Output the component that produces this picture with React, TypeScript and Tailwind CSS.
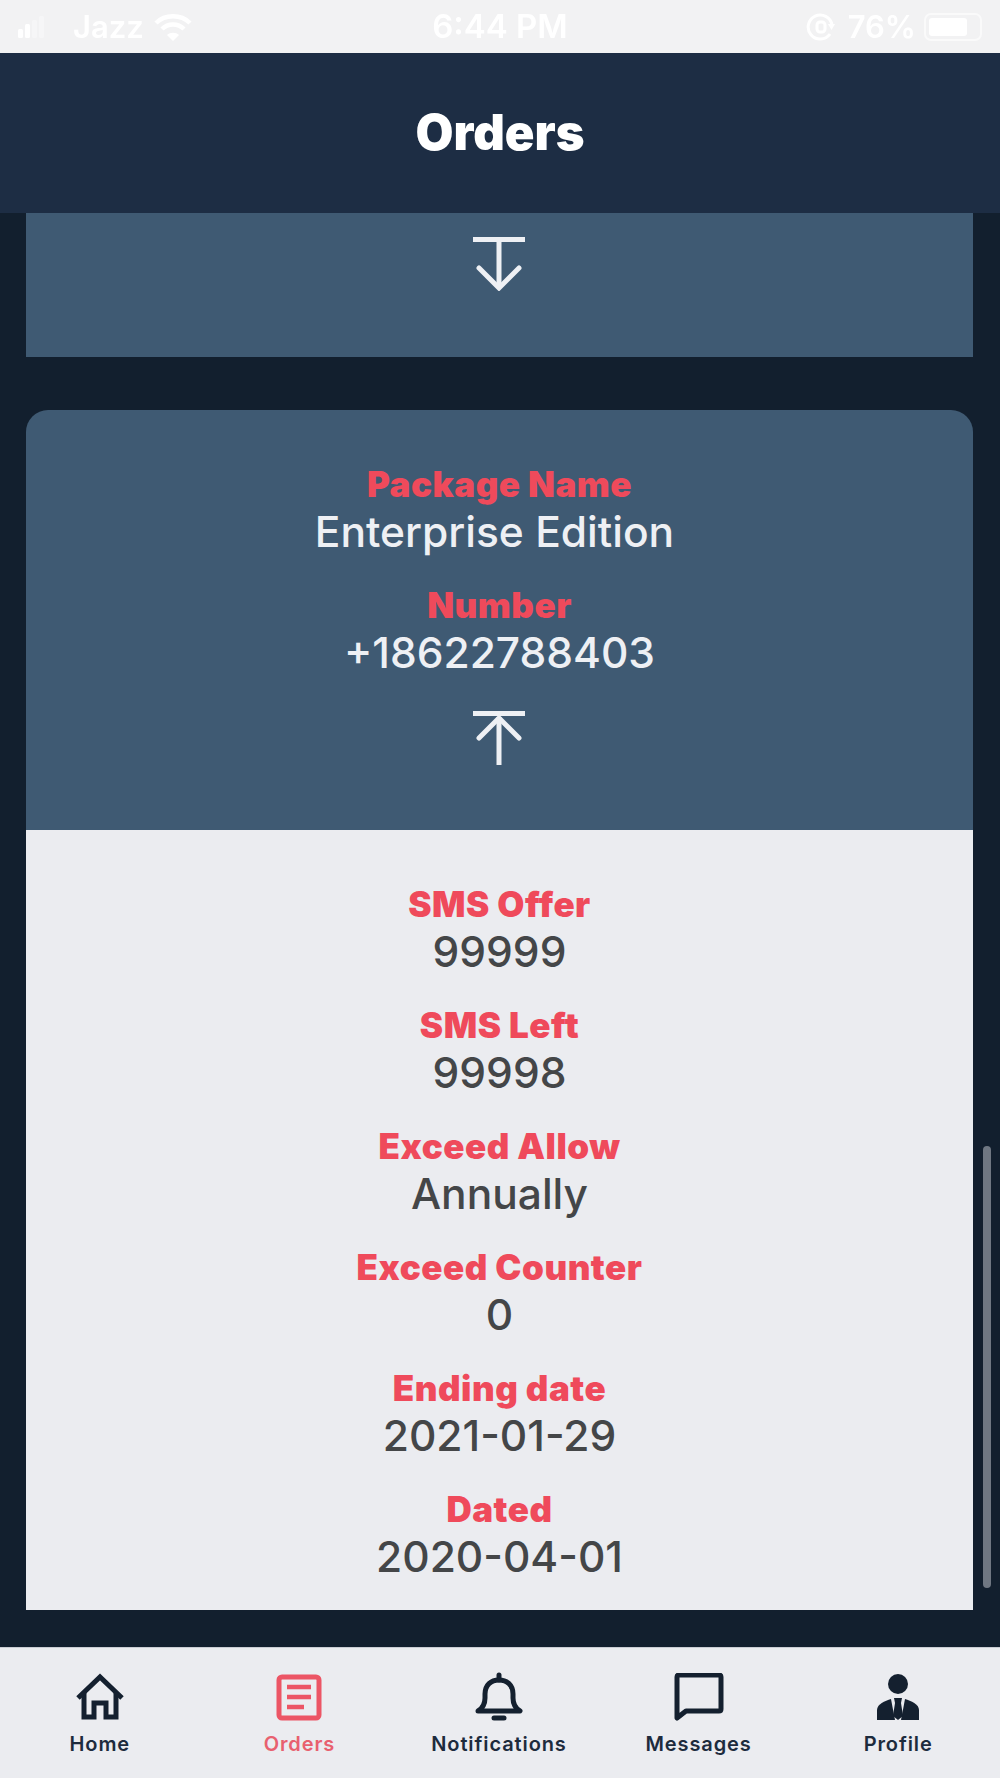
const font = 'font-["Inter","Noto_Sans",sans-serif]';

const topFields = [
  { label: 'Package Name', value: 'Enterprise Edition', shift: '-translate-x-[5px]' },
  { label: 'Number', value: '+18622788403', shift: '' },
];

const detailFields = [
  { label: 'SMS Offer', value: '99999' },
  { label: 'SMS Left', value: '99998' },
  { label: 'Exceed Allow', value: 'Annually' },
  { label: 'Exceed Counter', value: '0' },
  { label: 'Ending date', value: '2021-01-29' },
  { label: 'Dated', value: '2020-04-01' },
];

const StatusBar = () => (
  <div className="flex h-[53px] shrink-0 items-center justify-between bg-[#f2f2f3] text-[31px] font-semibold text-white blur-[0.6px]">
    <div className="flex items-center pl-[18px]">
      <svg width="28" height="22" viewBox="0 0 28 22" fill="#ffffff">
        <rect x="0" y="13" width="5" height="9" rx="1.5" />
        <rect x="7" y="8" width="5" height="14" rx="1.5" />
        <rect x="14" y="4" width="5" height="18" rx="1.5" opacity="0.35" />
        <rect x="21" y="0" width="5" height="22" rx="1.5" opacity="0.35" />
      </svg>
      <span className="ml-[27px] leading-none">Jazz</span>
      <svg className="ml-[10px]" width="38" height="30" viewBox="0 0 38 30" fill="none" stroke="#ffffff" strokeWidth="4.5">
        <path d="M2 11 C11 2 27 2 36 11" />
        <path d="M8 17 C14 11 24 11 30 17" />
        <path d="M19 29 L13 23 C16 20 22 20 25 23 Z" fill="#ffffff" stroke="none" />
      </svg>
    </div>
    <span className="absolute left-1/2 -translate-x-1/2 text-[33px] leading-none">6:44 PM</span>
    <div className="flex items-center pr-[18px]">
      <svg width="30" height="30" viewBox="0 0 30 30" fill="none" stroke="#ffffff" strokeWidth="3">
        <path d="M24 22 A12 12 0 1 1 26 13" />
        <rect x="11" y="10" width="8" height="10" rx="3" />
        <path d="M22 12 L29 12 L25.5 18 Z" fill="#ffffff" stroke="none" />
      </svg>
      <span className="ml-[12px] leading-none">76%</span>
      <div className="ml-[8px] flex h-[28px] w-[58px] items-center rounded-[7px] border-2 border-white/60 p-[3px]">
        <div className="h-full w-[38px] rounded-[3px] bg-white" />
      </div>
    </div>
  </div>
);

const ArrowDown = () => (
  <svg width="54" height="54" viewBox="0 0 54 54" fill="none" stroke="#eef0f4" strokeWidth="5" strokeLinecap="butt">
    <path d="M0 2.5 H52" />
    <path d="M26 2 V51" />
    <path d="M6 31 L26 51 L46 31" strokeLinecap="round" />
  </svg>
);

const ArrowUp = () => (
  <svg width="54" height="54" viewBox="0 0 54 54" fill="none" stroke="#eef0f4" strokeWidth="5">
    <path d="M0 2.5 H52" />
    <path d="M26 6 V54" />
    <path d="M6 27 L26 7 L46 27" strokeLinecap="round" />
  </svg>
);

const Field = ({ label, value, valueColor, shift }: { label: string; value: string; valueColor: string; shift?: string }) => (
  <div className="flex flex-col items-center">
    <span className="text-[35px] leading-[48px] font-black tracking-[0.5px] text-[#ef4a5b]">{label}</span>
    <span className={`text-[42.5px] leading-[48px] font-medium ${valueColor} ${shift || ''}`}>{value}</span>
  </div>
);

const tabs = [
  {
    label: 'Home',
    color: 'text-[#1d2b3d]',
    icon: (
      <svg width="48" height="48" viewBox="0 0 48 48" fill="none" stroke="#14202f" strokeWidth="5">
        <path d="M2 25 L24 4 L46 25" />
        <path d="M8 20 V44 H18 V30 H30 V44 H40 V20" />
      </svg>
    ),
  },
  {
    label: 'Orders',
    color: 'text-[#e8606f]',
    icon: (
      <svg width="48" height="48" viewBox="0 0 48 48" fill="none">
        <rect x="4" y="4" width="40" height="41" rx="3" stroke="#ec5565" strokeWidth="5" />
        <path d="M12 14 H36 M12 24 H36 M12 34 H29" stroke="#ec5565" strokeWidth="4.5" />
      </svg>
    ),
  },
  {
    label: 'Notifications',
    color: 'text-[#1d2b3d]',
    icon: (
      <svg width="48" height="50" viewBox="0 0 48 50" fill="none" stroke="#14202f" strokeWidth="5">
        <path d="M24 3 V8" strokeLinecap="round" />
        <path d="M3 39 C8 36 10 32 10 26 V22 C10 13 16 8 24 8 C32 8 38 13 38 22 V26 C38 32 40 36 45 39 Z" strokeLinejoin="round" />
        <path d="M19 46 H29" strokeLinecap="round" />
      </svg>
    ),
  },
  {
    label: 'Messages',
    color: 'text-[#1d2b3d]',
    icon: (
      <svg width="50" height="48" viewBox="0 0 50 48" fill="none" stroke="#14202f" strokeWidth="5">
        <path d="M3 4 Q3 2 5 2 H45 Q47 2 47 4 V36 Q47 38 45 38 H12 L3 45 Z" strokeLinejoin="round" />
      </svg>
    ),
  },
  {
    label: 'Profile',
    color: 'text-[#1d2b3d]',
    icon: (
      <svg width="42" height="46" viewBox="0 0 42 46" fill="#14202f">
        <circle cx="21" cy="10" r="10" />
        <path d="M0 46 V36 C0 30 8 27 14 25 L18 46 Z" />
        <path d="M42 46 V36 C42 30 34 27 28 25 L24 46 Z" />
        <path d="M17 24 H25 L24 29 L26 42 L21 46 L16 42 L18 29 Z" />
      </svg>
    ),
  },
];

export default function App() {
  return (
    <div className={`relative flex h-[1778px] w-[1000px] flex-col overflow-hidden bg-[#121f2e] ${font}`}>
      <StatusBar />

      <header className="flex h-[160px] shrink-0 items-center justify-center bg-[#1d2d44]">
        <h1 className="text-[49px] font-black text-white">Orders</h1>
      </header>

      <main className="flex flex-1 flex-col pr-[27px] pl-[26px]">
        <div className="flex h-[144px] shrink-0 justify-center bg-[#3f5a73] pt-[24px]">
          <ArrowDown />
        </div>

        <div className="mt-[53px] flex flex-col">
          <div className="flex h-[420px] flex-col items-center rounded-t-[22px] bg-[#3f5a73] pt-[50px]">
            <div className="flex flex-col gap-[25px]">
              {topFields.map((f) => (
                <Field key={f.label} label={f.label} value={f.value} shift={f.shift} valueColor="text-[#eef0f4]" />
              ))}
            </div>
            <div className="mt-[34px]">
              <ArrowUp />
            </div>
          </div>

          <div className="flex h-[780px] flex-col items-center gap-[25px] bg-[#ebecf0] pt-[50px]">
            {detailFields.map((f) => (
              <Field key={f.label} label={f.label} value={f.value} valueColor="text-[#444648]" />
            ))}
          </div>
        </div>
      </main>

      <nav className="grid h-[131px] shrink-0 grid-cols-5 border-t border-[#c9ccd3] bg-[#ebecf0] pt-[24px] pr-[2px]">
        {tabs.map((t) => (
          <div key={t.label} className="flex flex-col items-center">
            <div className="flex h-[50px] items-center justify-center">{t.icon}</div>
            <span className={`mt-[9px] text-[20px] leading-[26px] font-semibold tracking-[0.9px] ${t.color}`}>{t.label}</span>
          </div>
        ))}
      </nav>

      <div className="absolute top-[1146px] left-[983px] h-[442px] w-[8px] rounded-full bg-[#6f7782]" />
    </div>
  );
}
